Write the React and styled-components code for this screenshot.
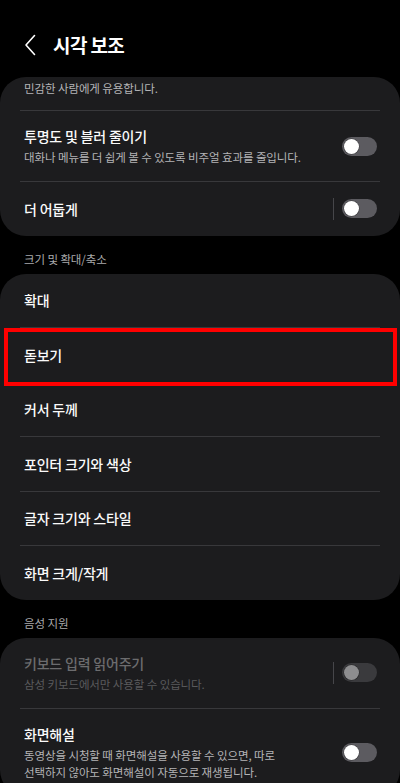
import React from 'react';
import styled, { createGlobalStyle } from 'styled-components';

const GlobalStyle = createGlobalStyle`
  html, body {
    margin: 0;
    padding: 0;
    background: #000;
  }
  body {
    font-family: "Noto Sans CJK KR", "Noto Sans", sans-serif;
  }
`;

const Screen = styled.div`
  width: 400px;
  height: 783px;
  overflow: hidden;
  background: #000;
  color: #fafafa;
  display: flex;
  flex-direction: column;
`;

const Header = styled.header`
  height: 77px;
  flex-shrink: 0;
  box-sizing: border-box;
  padding: 13px 0 0 24px;
  display: flex;
  align-items: center;
  gap: 17px;
`;

const Title = styled.h1`
  margin: 0;
  font-size: 19px;
  font-weight: 700;
  line-height: 24px;
  letter-spacing: -0.6px;
  color: #fff;
`;

const Card = styled.section`
  background: #1c1c1e;
  border-radius: 26px;
  overflow: hidden;
  flex-shrink: 0;
`;

const ClippedLine = styled.div`
  height: 33px;
  box-sizing: border-box;
  padding: 3px 24px 0;
  font-size: 11.5px;
  line-height: 16px;
  letter-spacing: -0.1px;
  color: #b4b4b6;
`;

const Divider = styled.div`
  height: 1px;
  margin: 0 20px;
  background: #38383b;
`;

const Row = styled.div`
  position: relative;
  display: flex;
  align-items: center;
  gap: 10px;
  box-sizing: border-box;
  min-height: 53.5px;
  padding: ${p => (p.$twoLine ? '15px 23px 15px 24px' : '0 23px 0 24px')};

  ${p => p.$highlight && `
    &::after {
      content: '';
      position: absolute;
      top: 0;
      bottom: -4px;
      left: 4px;
      right: 3px;
      border: 4px solid #ff0000;
      pointer-events: none;
    }
  `}
`;

const Texts = styled.div`
  flex: 1;
  min-width: 0;
`;

const RowTitle = styled.div`
  font-size: 14px;
  font-weight: 500;
  line-height: 20px;
  letter-spacing: -0.2px;
  color: ${p => (p.$disabled ? '#6c6c6e' : '#fafafa')};
`;

const RowSub = styled.div`
  margin-top: 3px;
  font-size: 11.5px;
  line-height: 17px;
  letter-spacing: -0.1px;
  color: ${p => (p.$disabled ? '#5a5a5c' : '#b4b4b6')};
`;

const SectionLabel = styled.div`
  padding: 15px 24px 7px;
  font-size: 11.5px;
  line-height: 16px;
  letter-spacing: -0.1px;
  color: #a9a9ab;
  flex-shrink: 0;
`;

const SwitchWrap = styled.div`
  display: flex;
  align-items: center;
  gap: 8px;
  flex-shrink: 0;
`;

const VLine = styled.span`
  width: 1px;
  height: 22px;
  background: #46464a;
`;

const Track = styled.span`
  position: relative;
  width: 35px;
  height: 19px;
  border-radius: 10px;
  background: ${p => (p.$disabled ? '#3a3a3d' : '#5c5b60')};
`;

const Knob = styled.span`
  position: absolute;
  top: 2px;
  left: 2px;
  width: 15px;
  height: 15px;
  border-radius: 50%;
  background: ${p => (p.$disabled ? '#8d8d8f' : '#ffffff')};
  box-shadow: 0 0 0 0.5px rgba(0, 0, 0, 0.35);
`;

function Toggle({ disabled, separator }) {
  return (
    <SwitchWrap>
      {separator && <VLine />}
      <Track $disabled={disabled}>
        <Knob $disabled={disabled} />
      </Track>
    </SwitchWrap>
  );
}

function BackIcon() {
  return (
    <svg width="12" height="22" viewBox="0 0 12 22" fill="none">
      <path d="M10.5 1.5 L2 11 L10.5 20.5" stroke="#fff" strokeWidth="1.6" strokeLinecap="round" strokeLinejoin="round" />
    </svg>
  );
}

const sizeItems = ['확대', '돋보기', '커서 두께', '포인터 크기와 색상', '글자 크기와 스타일', '화면 크게/작게'];

export default function App() {
  return (
    <Screen>
      <GlobalStyle />
      <Header>
        <BackIcon />
        <Title>시각 보조</Title>
      </Header>

      <Card>
        <ClippedLine>민감한 사람에게 유용합니다.</ClippedLine>
        <Divider />
        <Row $twoLine>
          <Texts>
            <RowTitle>투명도 및 블러 줄이기</RowTitle>
            <RowSub>대화나 메뉴를 더 쉽게 볼 수 있도록 비주얼 효과를 줄입니다.</RowSub>
          </Texts>
          <Toggle />
        </Row>
        <Divider />
        <Row>
          <Texts>
            <RowTitle>더 어둡게</RowTitle>
          </Texts>
          <Toggle separator />
        </Row>
      </Card>

      <SectionLabel>크기 및 확대/축소</SectionLabel>
      <Card>
        {sizeItems.map((item, i) => (
          <React.Fragment key={item}>
            {i > 0 && <Divider />}
            <Row $highlight={item === '돋보기'}>
              <Texts>
                <RowTitle>{item}</RowTitle>
              </Texts>
            </Row>
          </React.Fragment>
        ))}
      </Card>

      <SectionLabel>음성 지원</SectionLabel>
      <Card>
        <Row $twoLine>
          <Texts>
            <RowTitle $disabled>키보드 입력 읽어주기</RowTitle>
            <RowSub $disabled>삼성 키보드에서만 사용할 수 있습니다.</RowSub>
          </Texts>
          <Toggle disabled separator />
        </Row>
        <Divider />
        <Row $twoLine>
          <Texts>
            <RowTitle>화면해설</RowTitle>
            <RowSub>
              동영상을 시청할 때 화면해설을 사용할 수 있으면, 따로
              <br />
              선택하지 않아도 화면해설이 자동으로 재생됩니다.
            </RowSub>
          </Texts>
          <Toggle />
        </Row>
      </Card>
    </Screen>
  );
}
